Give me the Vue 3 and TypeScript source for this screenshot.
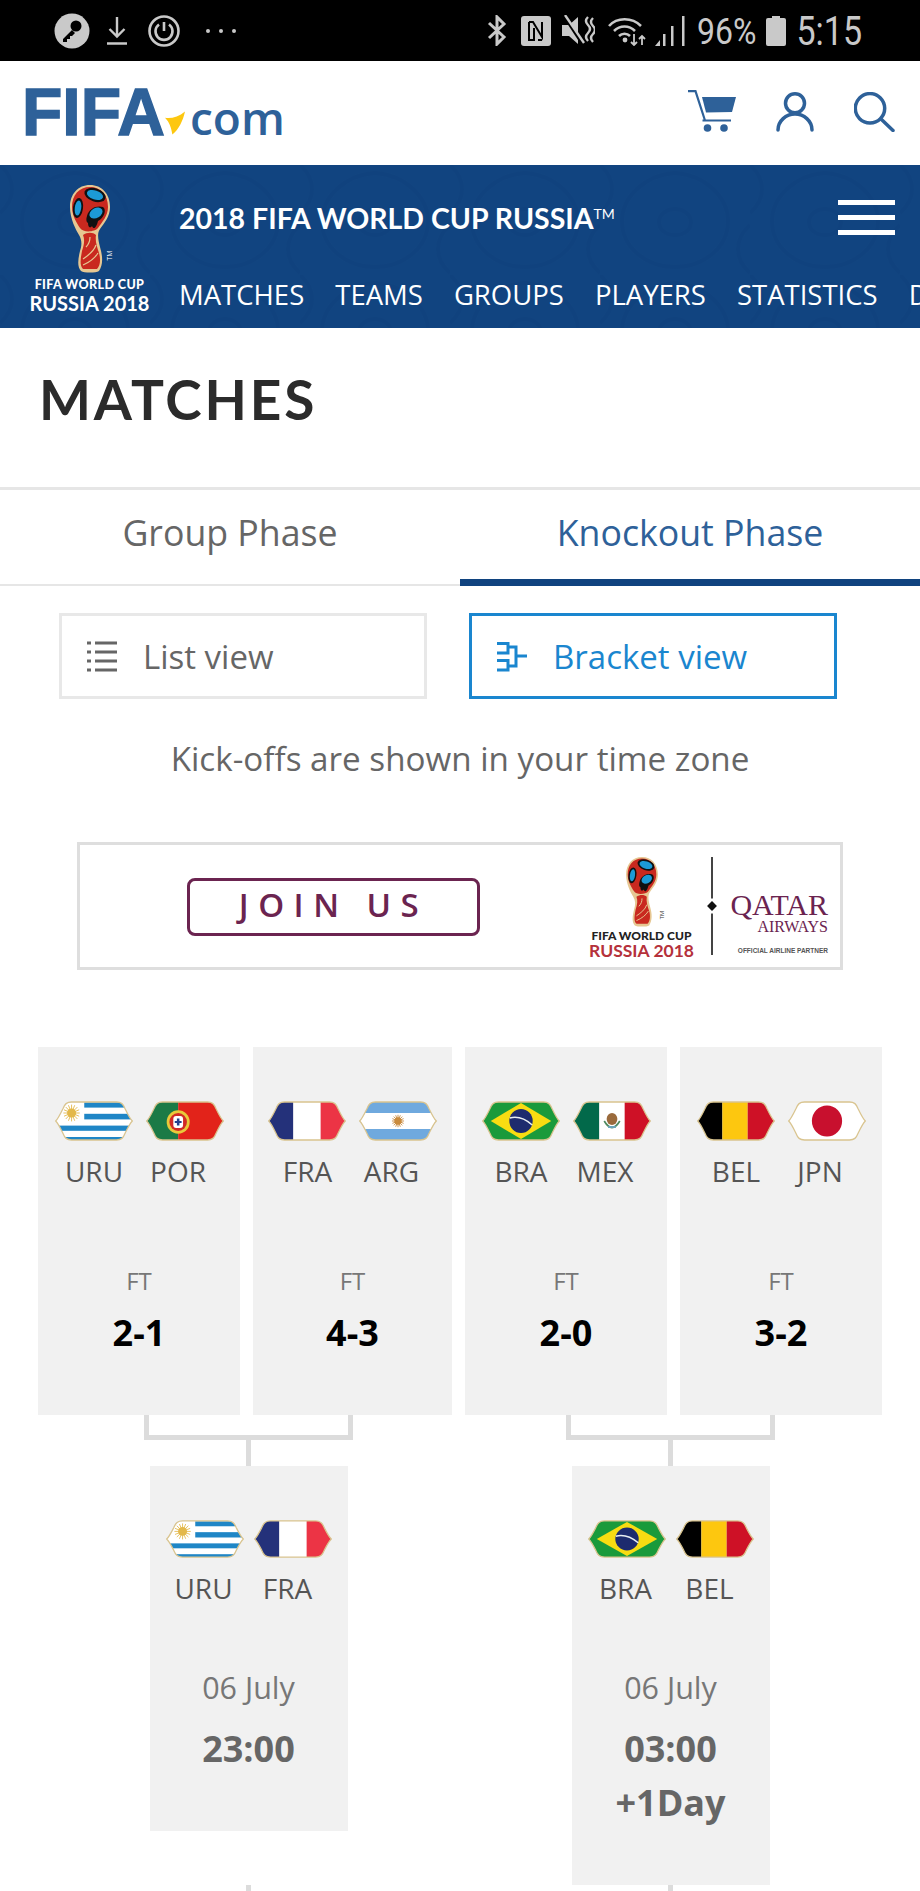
<script setup lang="ts">
import { h, type FunctionalComponent, type VNode } from 'vue'

type FlagCode = 'URU' | 'POR' | 'FRA' | 'ARG' | 'BRA' | 'MEX' | 'BEL' | 'JPN'

const rect = (x: number, y: number, w: number, hh: number, fill: string): VNode =>
  h('rect', { x, y, width: w, height: hh, fill })
const disc = (cx: number, cy: number, r: number, fill: string): VNode => h('circle', { cx, cy, r, fill })
const sun = (cx: number, cy: number, r: number, len: number, color: string): VNode[] => {
  const rays: VNode[] = []
  for (let i = 0; i < 16; i++) {
    const a = (i * Math.PI) / 8
    rays.push(
      h('line', {
        x1: cx,
        y1: cy,
        x2: cx + Math.cos(a) * (r + len),
        y2: cy + Math.sin(a) * (r + len),
        stroke: color,
        'stroke-width': 0.9
      })
    )
  }
  return [...rays, disc(cx, cy, r, color)]
}

const OUTLINE =
  'M0.700 20C3 18 5 14 8 8C10 3 12 1 17 1H63C68 1 70 3 72 8C75 14 77 18 79.300 20C77 22 75 26 72 32C70 37 68 39 63 39H17C12 39 10 37 8 32C5 26 3 22 0.700 20Z'

const flagArt: Record<FlagCode, () => VNode[]> = {
  URU: () => [
    rect(0, 0, 80, 40, '#fff'),
    rect(30, 1.4, 50, 5.2, '#1f86c6'),
    rect(30, 12.8, 50, 5.6, '#1f86c6'),
    rect(0, 24.6, 80, 5.2, '#1f86c6'),
    rect(0, 36, 80, 4, '#1f86c6'),
    ...sun(17, 12, 4.6, 3.8, '#e3b84a')
  ],
  POR: () => [
    rect(0, 0, 33, 40, '#1b7a46'),
    rect(33, 0, 47, 40, '#e2231a'),
    disc(33, 21, 11.8, '#e9c93a'),
    disc(33, 21, 9, '#d22a26'),
    h('rect', { x: 28, y: 15, width: 10, height: 12, rx: 3, fill: '#fff' }),
    rect(31.7, 17.5, 2.6, 7, '#24408e'),
    rect(29.5, 20, 7, 2, '#24408e')
  ],
  FRA: () => [rect(0, 0, 26, 40, '#24317a'), rect(26, 0, 28, 40, '#fff'), rect(54, 0, 26, 40, '#ec3445')],
  ARG: () => [
    rect(0, 0, 80, 40, '#6fa9de'),
    rect(0, 12, 80, 16, '#fff'),
    ...sun(40, 20, 3.8, 2.4, '#c98b3e')
  ],
  BRA: () => [
    rect(0, 0, 80, 40, '#1a9a3b'),
    h('polygon', { points: '40,2 71,20 40,38 9,20', fill: '#f8dc12' }),
    disc(40, 20, 12, '#1d2b6e'),
    h('path', { d: 'M28.500 17Q40 14 51.500 24', fill: 'none', stroke: '#e8eef2', 'stroke-width': 1.6 })
  ],
  MEX: () => [
    rect(0, 0, 27, 40, '#02694a'),
    rect(27, 0, 26, 40, '#fff'),
    rect(53, 0, 27, 40, '#ce1126'),
    h('ellipse', { cx: 40, cy: 18, rx: 5.5, ry: 6, fill: '#9a6a3c' }),
    h('path', { d: 'M32 20Q40 33 48 20', fill: 'none', stroke: '#4f8a5f', 'stroke-width': 1.8 }),
    rect(36, 25, 8, 2, '#6aa4b8')
  ],
  BEL: () => [rect(0, 0, 26, 40, '#000'), rect(26, 0, 26, 40, '#fdc70f'), rect(52, 0, 28, 40, '#ce1126')],
  JPN: () => [rect(0, 0, 80, 40, '#fff'), disc(40, 20, 15.5, '#c8102e')]
}

const Flag: FunctionalComponent<{ code: FlagCode }> = (props) =>
  h('svg', { class: 'flag-svg', viewBox: '0 0 80 40', preserveAspectRatio: 'none' }, [
    h('clipPath', { id: `flag-clip-${props.code}` }, [h('path', { d: OUTLINE })]),
    h('g', { 'clip-path': `url(#flag-clip-${props.code})` }, flagArt[props.code]()),
    h('path', { d: OUTLINE, fill: 'none', stroke: '#d9c48f', 'stroke-width': 1.3 })
  ])

interface Match {
  teams: [FlagCode, FlagCode]
  status: string
  score: string
}
interface Upcoming {
  teams: [FlagCode, FlagCode]
  date: string
  time: string
  extra?: string
}

const quarterFinalists: Match[] = [
  { teams: ['URU', 'POR'], status: 'FT', score: '2-1' },
  { teams: ['FRA', 'ARG'], status: 'FT', score: '4-3' },
  { teams: ['BRA', 'MEX'], status: 'FT', score: '2-0' },
  { teams: ['BEL', 'JPN'], status: 'FT', score: '3-2' }
]
const nextRound: Upcoming[] = [
  { teams: ['URU', 'FRA'], date: '06 July', time: '23:00' },
  { teams: ['BRA', 'BEL'], date: '06 July', time: '03:00', extra: '+1Day' }
]
const navItems = ['MATCHES', 'TEAMS', 'GROUPS', 'PLAYERS', 'STATISTICS', 'DOCUMENTS']
</script>

<template>
  <div class="page">
    <svg class="defs" width="0" height="0" aria-hidden="true">
      <symbol id="trophy" viewBox="0 0 40 88">
        <path fill="#e6c792" d="M20 0C32 0 40 9 40 22C40 32 34 38 30 44C27 48 28 54 30 62C33 72 33 80 29 86C26 88 14 88 11 86C7 82 8 74 10 66C12 60 12 55 9 50C6 45 0 34 0 22C0 9 8 0 20 0Z" />
        <path fill="#c9291f" d="M20 2C31 2 38 10 38 22C38 31 32 37 28 43C25 47 13 48 10 43C6 37 2 30 2 22C2 10 9 2 20 2Z" />
        <ellipse cx="25" cy="10" rx="11" ry="6.600" transform="rotate(18 25 10)" fill="#111" />
        <ellipse cx="25" cy="10" rx="8.400" ry="4.600" transform="rotate(18 25 10)" fill="#1c9ad6" />
        <ellipse cx="8" cy="23" rx="5" ry="10" transform="rotate(8 8 23)" fill="#111" />
        <ellipse cx="8" cy="23" rx="3.200" ry="7.600" transform="rotate(8 8 23)" fill="#1c9ad6" />
        <path fill="#111" d="M17 31C19 23 27 20 33 22C37 25 34 33 28 36C27 41 24 46 22 41C20 44 18 42 18 38C16 37 16 34 17 31Z" />
        <ellipse cx="26" cy="28" rx="7" ry="5" transform="rotate(-30 26 28)" fill="#1c9ad6" />
        <path fill="#c9291f" d="M13 50C17 47 23 47 26 50C25 56 27 62 29 68C31 75 30 81 27 84H13C9 80 11 72 12 66C14 60 15 55 13 50Z" />
        <path fill="none" stroke="#e6c792" stroke-width="1.200" d="M13 74C19 70 24 66 26 60M13 80C20 77 25 73 28 68M16 62C19 59 20 56 20 52" />
      </symbol>
    </svg>

    <div class="status">
      <div class="status-left">
        <svg class="st-key" viewBox="0 0 36 36">
          <circle cx="18" cy="18" r="17.500" fill="#c9c9c9" />
          <circle cx="22" cy="13" r="5.500" fill="#000" />
          <path d="M18 17L9 26v3h4v-3h3v-3h2l3-3" fill="#000" />
        </svg>
        <svg class="st-dl" viewBox="0 0 20 28" fill="none" stroke="#c9c9c9" stroke-width="2.400">
          <path d="M10 0V19M2.500 12L10 19.500L17.500 12M0 26.500H20" />
        </svg>
        <svg class="st-timer" viewBox="0 0 32 32" fill="none" stroke="#c9c9c9" stroke-width="2.600">
          <circle cx="16" cy="16" r="14.500" />
          <path d="M16 7V16" />
          <path d="M11 9.500A8.500 8.500 0 1 0 21 9.500" />
        </svg>
        <span class="st-dots"><i></i><i></i><i></i></span>
      </div>
      <div class="status-right">
        <svg class="st-bt" viewBox="0 0 20 31" fill="none" stroke="#c9c9c9" stroke-width="3">
          <path d="M2 8L17 22L10 29V2L17 9L2 23" />
        </svg>
        <svg class="st-nfc" viewBox="0 0 30 30">
          <rect width="30" height="30" rx="3" fill="#c9c9c9" />
          <path d="M8 6h4l9 15V6M8 6v18h5V12M21 24h-4" fill="none" stroke="#000" stroke-width="2" />
        </svg>
        <svg class="st-mute" viewBox="0 0 33 31" fill="#c9c9c9">
          <path d="M0 10h7l9-8v27l-9-8H0z" />
          <path d="M2 1L21 30" stroke="#000" stroke-width="3" />
          <path d="M3 0L22 28" stroke="#c9c9c9" stroke-width="2.400" />
          <path d="M26 2q-4 4 0 8t0 8t0 8M31 3q-4 4 0 8t0 8t0 8" fill="none" stroke="#c9c9c9" stroke-width="2.400" />
        </svg>
        <svg class="st-wifi" viewBox="0 0 38 30" fill="none" stroke="#c9c9c9" stroke-width="2.600">
          <path d="M1 10C9 1 24 1 33 10M6 15C12 9 21 9 27 15M11 20C14 17 19 17 22 20" />
          <circle cx="17" cy="24" r="2.400" fill="#c9c9c9" stroke="none" />
          <path d="M26 18V29M23 26L26 29L29 26M34 29V20M31 23L34 20L37 23" stroke-width="1.800" />
        </svg>
        <svg class="st-signal" viewBox="0 0 30 30" fill="#c9c9c9">
          <path d="M0 30L5 24V30Z" />
          <rect x="8" y="18" width="2.500" height="12" />
          <rect x="16" y="10" width="2.500" height="20" />
          <rect x="27" y="0" width="2.500" height="30" />
        </svg>
        <span class="st-text st-pct">96%</span>
        <svg class="st-batt" viewBox="0 0 20 30" fill="#c9c9c9">
          <path d="M6 0h8v2h4a2 2 0 0 1 2 2v24a2 2 0 0 1-2 2H2a2 2 0 0 1-2-2V4a2 2 0 0 1 2-2h4z" />
        </svg>
        <span class="st-text st-time">5:15</span>
      </div>
    </div>

    <header class="top">
      <div class="brand">
        <span class="brand-fifa">FIFA</span>
        <svg class="brand-swoosh" viewBox="0 0 19 22">
          <path fill="#fdc70f" d="M0 6C6 7 13 5 19 0C17 9 13 17 7 22C6 15 4 10 0 6Z" />
        </svg>
        <span class="brand-com">com</span>
      </div>
      <div class="top-icons">
        <svg class="ic-cart" viewBox="0 0 48 42">
          <path d="M0 1.200H7.500L17 30.500M14.500 30.500H43" fill="none" stroke="#2e6199" stroke-width="2.200" />
          <path d="M14 7H48L44 22L18 22.500Z" fill="#2e6199" />
          <circle cx="19.500" cy="38" r="3.800" fill="#2e6199" />
          <circle cx="36" cy="38" r="3.800" fill="#2e6199" />
        </svg>
        <svg class="ic-user" viewBox="0 0 39 40" fill="none" stroke="#2e6199" stroke-width="3.500" stroke-linecap="round">
          <circle cx="19" cy="11.300" r="9.500" />
          <path d="M2 38C2 29 10 22 19 22C28 22 36 29 36 38" />
        </svg>
        <svg class="ic-search" viewBox="0 0 41 40" fill="none" stroke="#2e6199" stroke-width="3.500" stroke-linecap="round">
          <circle cx="16" cy="16.300" r="14.700" />
          <path d="M27 27L39 38.500" />
        </svg>
      </div>
    </header>

    <nav class="band">
      <svg class="band-pattern" width="920" height="163" aria-hidden="true">
        <defs>
          <pattern id="swirl" width="150" height="110" patternUnits="userSpaceOnUse">
            <path d="M75 8C105 10 128 32 128 56C128 84 102 102 75 102C48 102 22 84 22 56C22 32 45 10 75 8ZM75 44C84 44 91 50 91 57C91 65 84 70 75 70C66 70 59 65 59 57C59 50 66 44 75 44ZM0 0C16 14 16 34 0 48M150 60C134 74 134 94 150 108" fill="none" stroke="#0d3a72" stroke-width="4" opacity="0.18" />
          </pattern>
        </defs>
        <rect width="920" height="163" fill="url(#swirl)" />
      </svg>
      <div class="band-logo">
        <svg class="band-trophy"><use href="#trophy" /></svg>
        <span class="band-tm">TM</span>
        <span class="band-wc">FIFA WORLD CUP</span>
        <span class="band-ru">RUSSIA 2018</span>
      </div>
      <div class="band-main">
        <div class="band-row">
          <span class="band-title">2018 FIFA WORLD CUP RUSSIA<sup>TM</sup></span>
          <span class="burger"><i></i><i></i><i></i></span>
        </div>
        <div class="band-links">
          <a v-for="item in navItems" :key="item">{{ item }}</a>
        </div>
      </div>
    </nav>

    <h1 class="heading">MATCHES</h1>

    <div class="tabs">
      <div class="tab">Group Phase</div>
      <div class="tab tab-active">Knockout Phase</div>
    </div>

    <div class="views">
      <button class="view">
        <svg class="view-ic" viewBox="0 0 30 31" fill="none" stroke="#666" stroke-width="3">
          <path d="M8 2H30M8 11H30M8 20H30M8 29H30M0 2H4M0 11H4M0 20H4M0 29H4" />
        </svg>
        List view
      </button>
      <button class="view view-on">
        <svg class="view-ic" viewBox="0 0 30 31" fill="none" stroke="#1a86cf" stroke-width="3">
          <path d="M0 2.500H11V12H0M0 19.500H11V29H0M11 6H19V25H11M19 15H30" />
        </svg>
        Bracket view
      </button>
    </div>

    <p class="note">Kick-offs are shown in your time zone</p>

    <div class="banner">
      <div class="join">JOIN US</div>
      <div class="sponsor">
        <svg class="sp-trophy"><use href="#trophy" /></svg>
        <span class="sp-tm">TM</span>
        <span class="sp-wc">FIFA WORLD CUP</span>
        <span class="sp-ru">RUSSIA 2018</span>
      </div>
      <div class="sp-rule"><i class="sp-diamond"></i></div>
      <div class="qatar">
        <span class="q-big">QATAR</span>
        <span class="q-small">AIRWAYS</span>
        <span class="q-note">OFFICIAL AIRLINE PARTNER</span>
      </div>
    </div>

    <section class="bracket">
      <div class="round-one">
        <article v-for="m in quarterFinalists" :key="m.score" class="card card-one">
          <div class="flags">
            <Flag v-for="t in m.teams" :key="t" :code="t" />
          </div>
          <div class="codes">
            <span v-for="t in m.teams" :key="t">{{ t }}</span>
          </div>
          <div class="ft">{{ m.status }}</div>
          <div class="score">{{ m.score }}</div>
        </article>
      </div>
      <div class="round-two">
        <div v-for="m in nextRound" :key="m.time" class="pair">
          <div class="joiner"></div>
          <div class="stem"></div>
          <article class="card card-two">
            <div class="flags flags-tight">
              <Flag v-for="t in m.teams" :key="t" :code="t" />
            </div>
            <div class="codes codes-two">
              <span v-for="t in m.teams" :key="t">{{ t }}</span>
            </div>
            <div class="date">{{ m.date }}</div>
            <div class="time">{{ m.time }}</div>
            <div v-if="m.extra" class="extra">{{ m.extra }}</div>
          </article>
          <div class="stem stem-end"></div>
        </div>
      </div>
    </section>
  </div>
</template>

<style>
html,
body {
  margin: 0;
  background: #fff;
}
</style>

<style scoped>
.page {
  width: 920px;
  height: 1891px;
  overflow: hidden;
  background: #fff;
  font-family: "Open Sans", "Noto Sans", sans-serif;
  color: #666;
}
.defs {
  position: absolute;
}

/* status bar */
.status {
  height: 61px;
  background: #000;
  display: flex;
  justify-content: space-between;
  align-items: center;
  box-sizing: border-box;
  padding: 0 58px 0 54px;
}
.status-left,
.status-right {
  display: flex;
  align-items: center;
}
.st-key {
  width: 36px;
  height: 36px;
}
.st-dl {
  width: 20px;
  height: 28px;
  margin-left: 17px;
}
.st-timer {
  width: 32px;
  height: 32px;
  margin-left: 21px;
}
.st-dots {
  display: flex;
  gap: 9px;
  margin-left: 26px;
}
.st-dots i {
  width: 4px;
  height: 4px;
  border-radius: 50%;
  background: #c9c9c9;
}
.st-bt {
  width: 20px;
  height: 31px;
}
.st-nfc {
  width: 30px;
  height: 30px;
  margin-left: 14px;
}
.st-mute {
  width: 33px;
  height: 31px;
  margin-left: 11px;
}
.st-wifi {
  width: 38px;
  height: 30px;
  margin-left: 13px;
}
.st-signal {
  width: 30px;
  height: 30px;
  margin-left: 9px;
}
.st-text {
  font-family: Roboto, sans-serif;
  font-size: 32px;
  color: #c9c9c9;
  line-height: 36px;
  transform: scaleY(1.17);
}
.st-pct {
  margin-left: 12px;
}
.st-batt {
  width: 20px;
  height: 30px;
  margin-left: 10px;
}
.st-time {
  margin-left: 10px;
  font-size: 34px;
}

/* white header */
.top {
  height: 104px;
  display: flex;
  justify-content: space-between;
  box-sizing: border-box;
  padding: 0 25px 0 22px;
}
.brand {
  display: flex;
  align-items: baseline;
  height: 73px;
  padding-top: 15px;
}
.brand-fifa {
  font-family: "Liberation Sans", Arial, sans-serif;
  font-weight: 700;
  font-size: 66px;
  line-height: 73px;
  color: #2e6199;
  -webkit-text-stroke: 1.400px #2e6199;
}
.brand-swoosh {
  width: 20px;
  height: 24px;
  margin-left: 0;
}
.brand-com {
  font-weight: 600;
  font-size: 46px;
  line-height: 73px;
  color: #2e6199;
  margin-left: 5px;
}
.top-icons {
  display: flex;
  align-items: flex-start;
  padding-top: 29px;
}
.ic-cart {
  width: 48px;
  height: 42px;
}
.ic-user {
  width: 39px;
  height: 40px;
  margin: 2px 0 0 40px;
}
.ic-search {
  width: 41px;
  height: 40px;
  margin: 2px 0 0 39px;
}

/* blue band */
.band {
  position: relative;
  height: 163px;
  background: #114480;
  display: flex;
  overflow: hidden;
  color: #fff;
}
.band-pattern {
  position: absolute;
  inset: 0;
}
.band-logo {
  position: relative;
  width: 179px;
  flex: none;
  display: flex;
  flex-direction: column;
  align-items: center;
  padding-top: 20px;
  box-sizing: border-box;
}
.band-trophy {
  width: 40px;
  height: 88px;
}
.band-tm {
  position: absolute;
  top: 86px;
  left: 104px;
  font-size: 7px;
  transform: rotate(-90deg);
}
.band-wc {
  font-family: Lato, sans-serif;
  font-weight: 900;
  font-size: 12.500px;
  line-height: 14px;
  letter-spacing: 0.400px;
  margin-top: 5px;
  width: 150px;
  text-align: center;
  white-space: nowrap;
}
.band-ru {
  font-family: Lato, sans-serif;
  font-weight: 700;
  font-size: 20px;
  line-height: 20px;
  margin-top: 1px;
  width: 150px;
  text-align: center;
  white-space: nowrap;
}
.band-main {
  position: relative;
  flex: 1;
  min-width: 0;
}
.band-row {
  display: flex;
  justify-content: space-between;
  align-items: center;
  padding: 35px 25px 0 0;
}
.band-title {
  font-family: Lato, sans-serif;
  font-weight: 700;
  font-size: 28.500px;
  line-height: 34px;
  white-space: nowrap;
}
.band-title sup {
  font-size: 14px;
  line-height: 0;
  vertical-align: 10px;
  font-weight: 400;
}
.burger {
  display: flex;
  flex-direction: column;
  gap: 10px;
}
.burger i {
  display: block;
  width: 57px;
  height: 5px;
  background: #fff;
}
.band-links {
  display: flex;
  gap: 31px;
  margin-top: 40px;
  white-space: nowrap;
}
.band-links a {
  font-size: 27.500px;
  line-height: 40px;
  flex: none;
}

/* heading + tabs */
.heading {
  margin: 0;
  height: 159px;
  box-sizing: border-box;
  padding: 40px 0 0 39px;
  font-family: Lato, sans-serif;
  font-weight: 700;
  font-size: 55px;
  line-height: 62px;
  letter-spacing: 2.800px;
  color: #2b2b2b;
}
.tabs {
  height: 99px;
  box-sizing: border-box;
  display: flex;
  border-top: 3px solid #e6e6e6;
  border-bottom: 2px solid #e6e6e6;
}
.tab {
  width: 50%;
  height: 94px;
  box-sizing: border-box;
  text-align: center;
  font-size: 35.700px;
  line-height: 84px;
  color: #666;
}
.tab-active {
  height: 96px;
  color: #2e6199;
  border-bottom: 7px solid #10437f;
}

/* view buttons */
.views {
  display: flex;
  gap: 42px;
  margin: 27px 0 0 59px;
}
.view {
  width: 368px;
  height: 86px;
  box-sizing: border-box;
  background: #fff;
  border: 3px solid #e8e8e8;
  display: flex;
  align-items: center;
  gap: 26px;
  padding: 0 0 0 25px;
  font-family: inherit;
  font-size: 33px;
  color: #666;
}
.view-on {
  border-color: #1a86cf;
  color: #1a86cf;
}
.view-ic {
  width: 30px;
  height: 31px;
  flex: none;
}
.note {
  margin: 38px 0 0;
  text-align: center;
  font-size: 33.200px;
  line-height: 44px;
  color: #666;
}

/* banner */
.banner {
  position: relative;
  width: 766px;
  height: 128px;
  box-sizing: border-box;
  margin: 61px 0 0 77px;
  border: 3px solid #dedede;
  display: flex;
  align-items: flex-start;
}
.join {
  width: 293px;
  height: 58px;
  box-sizing: border-box;
  margin: 33px 0 0 107px;
  border: 3px solid #6b2450;
  border-radius: 8px;
  text-align: center;
  font-weight: 600;
  font-size: 33px;
  line-height: 48px;
  letter-spacing: 9.500px;
  color: #6b2450;
}
.sponsor {
  position: relative;
  width: 103px;
  margin: 12px 0 0 110px;
  display: flex;
  flex-direction: column;
  align-items: center;
  flex: none;
}
.sp-trophy {
  width: 32px;
  height: 70px;
}
.sp-tm {
  position: absolute;
  top: 54px;
  left: 68px;
  font-size: 6px;
  color: #333;
  transform: rotate(-90deg);
}
.sp-wc {
  font-family: Lato, sans-serif;
  font-weight: 900;
  font-size: 12px;
  line-height: 12px;
  margin-top: 3px;
  color: #222;
  white-space: nowrap;
}
.sp-ru {
  font-family: Lato, sans-serif;
  font-weight: 700;
  font-size: 17.500px;
  line-height: 18px;
  color: #b5313b;
  white-space: nowrap;
}
.sp-rule {
  position: relative;
  width: 2px;
  height: 98px;
  margin: 12px 0 0 18px;
  background: #444;
  flex: none;
}
.sp-diamond {
  position: absolute;
  top: 44px;
  left: -4px;
  width: 10px;
  height: 10px;
  background: #111;
  box-shadow: 0 0 0 3px #fff;
  transform: rotate(45deg) scale(0.7);
}
.qatar {
  display: flex;
  flex-direction: column;
  align-items: flex-end;
  width: 96px;
  margin: 44px 0 0 19px;
  font-family: "Liberation Serif", serif;
  color: #6b2450;
  flex: none;
  white-space: nowrap;
}
.q-big {
  font-size: 30px;
  line-height: 32px;
}
.q-small {
  font-size: 16px;
  line-height: 14px;
  margin-top: -1px;
}
.q-note {
  font-family: "Liberation Sans", sans-serif;
  font-weight: 700;
  font-size: 6.500px;
  line-height: 8px;
  margin-top: 13px;
  color: #555;
}

/* bracket */
.bracket {
  padding: 77px 38px 0;
}
.round-one {
  display: grid;
  grid-template-columns: 202px 199px 202px 202px;
  column-gap: 13px;
}
.card {
  background: #f1f1f1;
  box-sizing: border-box;
  text-align: center;
}
.card-one {
  height: 368px;
  padding-top: 54px;
}
.card-two {
  width: 198px;
  padding: 54px 0 60px;
}
.flags {
  display: flex;
  justify-content: center;
  gap: 13px;
}
.flags-tight {
  gap: 10px;
}
.flag-svg {
  width: 78px;
  height: 40px;
  flex: none;
}
.flags-tight .flag-svg {
  height: 38px;
}
.codes {
  display: flex;
  justify-content: center;
  margin: 11px 6px 0 0;
  font-size: 28px;
  line-height: 38px;
  color: #555;
}
.codes span {
  width: 84px;
  flex: none;
}
.codes-two {
  margin-top: 11px;
}
.ft {
  margin-top: 74px;
  font-size: 24px;
  line-height: 34px;
  color: #777;
}
.score {
  margin-top: 13px;
  font-size: 36px;
  font-weight: 700;
  line-height: 44px;
  color: #000;
}
.date {
  margin-top: 62px;
  font-size: 30.500px;
  line-height: 36px;
  color: #777;
}
.time,
.extra {
  font-size: 36px;
  font-weight: 700;
  line-height: 44px;
  color: #666;
}
.time {
  margin-top: 22px;
}
.extra {
  margin-top: 10px;
}
.round-two {
  display: grid;
  grid-template-columns: 421px 423px;
}
.pair {
  display: flex;
  flex-direction: column;
  align-items: center;
}
.joiner {
  width: 209px;
  height: 25px;
  box-sizing: border-box;
  border: 5px solid #dcdcdc;
  border-top: 0;
}
.stem {
  width: 5px;
  height: 26px;
  background: #dcdcdc;
}
.stem-end {
  margin-top: auto;
  height: 6px;
}
</style>
